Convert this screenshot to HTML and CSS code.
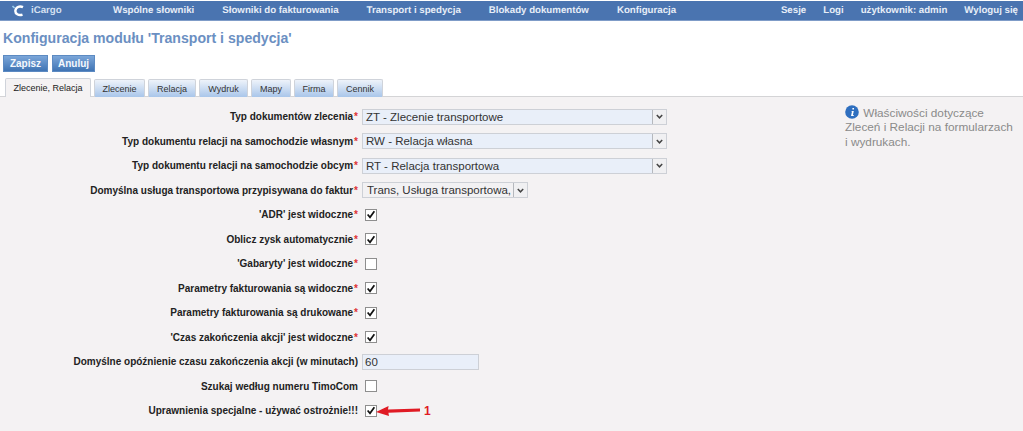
FILE: index.html
```html
<!DOCTYPE html>
<html lang="pl">
<head>
<meta charset="utf-8">
<title>iCargo</title>
<link rel="stylesheet" href="styles.css">
</head>
<body>
<nav class="nav">
  <div class="brand">
    <svg class="logo" width="12" height="12" viewBox="0 0 12 12"><path d="M11 2.2 C8 0.8 4 1.4 3.4 5.5 C3 8.8 6.5 11 10.5 9.6" fill="none" stroke="#fff" stroke-width="2.4"/><path d="M0.5 1 L2.6 3" stroke="#9fd0ee" stroke-width="1.6"/></svg>
    <span class="brand-name">iCargo</span>
  </div>
  <div class="menu">
    <a>Wspólne słowniki</a><a>Słowniki do fakturowania</a><a>Transport i spedycja</a><a>Blokady dokumentów</a><a>Konfiguracja</a>
  </div>
  <div class="menu-right">
    <a>Sesje</a><a>Logi</a><a>użytkownik: admin</a><a>Wyloguj się</a>
  </div>
</nav>
<h1 class="title">Konfiguracja modułu 'Transport i spedycja'</h1>
<div class="actions">
  <button class="btn btn-save">Zapisz</button>
  <button class="btn btn-cancel">Anuluj</button>
</div>
<div class="tabs">
  <div class="tab active t1">Zlecenie, Relacja</div>
  <div class="tab t2">Zlecenie</div>
  <div class="tab t3">Relacja</div>
  <div class="tab t4">Wydruk</div>
  <div class="tab t5">Mapy</div>
  <div class="tab t6">Firma</div>
  <div class="tab t7">Cennik</div>
</div>
<main class="panel">
  <div class="form">
    <div class="lbl">Typ dokumentów zlecenia<i>*</i></div>
    <div class="sel wide"><span>ZT - Zlecenie transportowe</span><b class="arrow"><svg width="7" height="5" viewBox="0 0 7 5"><path d="M0.8 1 L3.5 3.8 L6.2 1" fill="none" stroke="#444" stroke-width="1.5"/></svg></b></div>
    <div class="lbl">Typ dokumentu relacji na samochodzie własnym<i>*</i></div>
    <div class="sel wide"><span>RW - Relacja własna</span><b class="arrow"><svg width="7" height="5" viewBox="0 0 7 5"><path d="M0.8 1 L3.5 3.8 L6.2 1" fill="none" stroke="#444" stroke-width="1.5"/></svg></b></div>
    <div class="lbl">Typ dokumentu relacji na samochodzie obcym<i>*</i></div>
    <div class="sel wide"><span>RT - Relacja transportowa</span><b class="arrow"><svg width="7" height="5" viewBox="0 0 7 5"><path d="M0.8 1 L3.5 3.8 L6.2 1" fill="none" stroke="#444" stroke-width="1.5"/></svg></b></div>
    <div class="lbl">Domyślna usługa transportowa przypisywana do faktur<i>*</i></div>
    <div class="sel narrow"><span>Trans, Usługa transportowa,</span><b class="arrow"><svg width="7" height="5" viewBox="0 0 7 5"><path d="M0.8 1 L3.5 3.8 L6.2 1" fill="none" stroke="#444" stroke-width="1.5"/></svg></b></div>
    <div class="lbl">'ADR' jest widoczne<i>*</i></div>
    <div class="chk"><svg width="11" height="11" viewBox="0 0 11 11"><path d="M1.8 5.5 L4.4 8.6 L9.2 1.8" fill="none" stroke="#111" stroke-width="1.9"/></svg></div>
    <div class="lbl">Oblicz zysk automatycznie<i>*</i></div>
    <div class="chk"><svg width="11" height="11" viewBox="0 0 11 11"><path d="M1.8 5.5 L4.4 8.6 L9.2 1.8" fill="none" stroke="#111" stroke-width="1.9"/></svg></div>
    <div class="lbl">'Gabaryty' jest widoczne<i>*</i></div>
    <div class="chk"></div>
    <div class="lbl">Parametry fakturowania są widoczne<i>*</i></div>
    <div class="chk"><svg width="11" height="11" viewBox="0 0 11 11"><path d="M1.8 5.5 L4.4 8.6 L9.2 1.8" fill="none" stroke="#111" stroke-width="1.9"/></svg></div>
    <div class="lbl">Parametry fakturowania są drukowane<i>*</i></div>
    <div class="chk"><svg width="11" height="11" viewBox="0 0 11 11"><path d="M1.8 5.5 L4.4 8.6 L9.2 1.8" fill="none" stroke="#111" stroke-width="1.9"/></svg></div>
    <div class="lbl">'Czas zakończenia akcji' jest widoczne<i>*</i></div>
    <div class="chk"><svg width="11" height="11" viewBox="0 0 11 11"><path d="M1.8 5.5 L4.4 8.6 L9.2 1.8" fill="none" stroke="#111" stroke-width="1.9"/></svg></div>
    <div class="lbl">Domyślne opóźnienie czasu zakończenia akcji (w minutach)</div>
    <div class="inp">60</div>
    <div class="lbl">Szukaj według numeru TimoCom</div>
    <div class="chk"></div>
    <div class="lbl">Uprawnienia specjalne - używać ostrożnie!!!</div>
    <div class="chk marked"><svg width="11" height="11" viewBox="0 0 11 11"><path d="M1.8 5.5 L4.4 8.6 L9.2 1.8" fill="none" stroke="#111" stroke-width="1.9"/></svg>
      <div class="callout">
        <svg width="44" height="12" viewBox="0 0 44 12"><path d="M44 3.4 L12 4.6 L12.6 1 L0 7 L13 11 L12.4 7.8 L44 6.4 Z" fill="#e01b24"/></svg>
        <span>1</span>
      </div>
    </div>
  </div>
  <aside class="info">
    <svg class="info-icon" width="14" height="14" viewBox="0 0 14 14"><circle cx="7" cy="7" r="6.8" fill="#2f6fbf"/><path d="M7.4 3 h1.6 v1.6 h-1.6 Z M6.8 6 h2 L7.9 10 h1 l-.3 1 H6 L6.9 7 h-.4 Z" fill="#fff"/></svg>
    Właściwości dotyczące Zleceń i Relacji na formularzach i wydrukach.
  </aside>
</main>
</body>
</html>
```
FILE: styles.css
```css
* { box-sizing: border-box; }
html, body { height: 100%; }
body {
  margin: 0;
  background: #fff;
  font-family: "Liberation Sans", Arial, sans-serif;
  overflow: hidden;
  display: flex;
  flex-direction: column;
}
.nav {
  height: 20px;
  margin-top: 1px;
  flex: none;
  display: flex;
  align-items: center;
  background: #4a74b0;
  border-bottom: 1px solid #7f9cc8;
  color: #e6edf7;
  font-size: 9.7px;
  font-weight: bold;
  padding-right: 5px;
  text-rendering: geometricPrecision;
}
.brand { width: 113px; display: flex; align-items: center; padding-left: 12px; flex: none; }
.logo { flex: none; }
.brand-name { margin-left: 7px; color: #d5e0f0; }
.menu { display: flex; gap: 28px; white-space: nowrap; }
.menu-right { margin-left: auto; display: flex; gap: 17px; white-space: nowrap; }
.title {
  margin: 8px 0 0 3px;
  height: 18px;
  font-size: 14.1px;
  line-height: 18px;
  font-weight: bold;
  color: #6b8fc2;
  flex: none;
}
.actions { display: flex; gap: 4px; margin: 8px 0 0 3px; flex: none; }
.btn {
  height: 17px;
  border: 1px solid #5c8ac2;
  padding: 0;
  background: linear-gradient(#7ba6d9, #3f74b4);
  color: #f4f8fd;
  font: bold 10px "Liberation Sans", Arial, sans-serif;
}
.btn-save { width: 45px; }
.btn-cancel { width: 43px; }
.tabs { display: flex; gap: 3px; margin: 6px 0 0 5px; height: 19px; flex: none; align-items: flex-end; position: relative; z-index: 1; }
.tab {
  height: 18px;
  border: 1px solid #cfd3da;
  border-bottom: 0;
  border-radius: 2px 2px 0 0;
  background: linear-gradient(#eef3fa, #a9c6ea);
  font-size: 9px;
  line-height: 18px;
  text-align: center;
  color: #333;
  white-space: nowrap;
}
.tab.active { height: 19px; background: #f4f2f3; color: #222; }
.t1 { width: 86px; }
.t2 { width: 51px; }
.t3 { width: 48px; }
.t4 { width: 49px; }
.t5 { width: 40px; }
.t6 { width: 40px; }
.t7 { width: 46px; }
.panel {
  flex: 1;
  background: #f4f2f3;
  border-top: 1px solid #d4d4d6;
  margin-top: -1px;
  display: flex;
  padding-top: 7.5px;
  min-height: 0;
}
.form {
  width: 845px;
  flex: none;
  display: grid;
  grid-template-columns: 367px 1fr;
  grid-auto-rows: 24.5px;
  align-items: center;
}
.lbl {
  font-size: 10px;
  font-weight: bold;
  color: #222;
  text-align: right;
  padding-right: 9px;
  white-space: nowrap;
}
.lbl i { color: #d33; font-style: normal; margin-left: 1px; }
.sel {
  height: 16px;
  display: flex;
  align-items: center;
  justify-content: space-between;
  margin-left: -5px;
  background: #e9eff9;
  border: 1px solid #cdd0d6;
  font-size: 11.5px;
  color: #333;
  padding-left: 3px;
  white-space: nowrap;
}
.sel.wide { width: 305px; }
.sel.narrow { width: 166px; background: #f2f1f3; padding-left: 4px; }
.arrow {
  width: 14px;
  height: 14px;
  flex: none;
  display: flex;
  align-items: center;
  justify-content: center;
  background: #f0f0f2;
  border-left: 1px solid #b5b8bd;
}
.chk {
  width: 12px;
  height: 12px;
  margin-left: -2px;
  border: 1px solid #8e8e8e;
  background: #fff;
  display: flex;
  align-items: center;
  justify-content: center;
  position: relative;
}
.inp {
  height: 16px;
  margin-left: -5px;
  width: 117px;
  background: #e9eff9;
  border: 1px solid #cdd0d6;
  font-size: 11.5px;
  line-height: 14px;
  color: #333;
  padding-left: 2px;
}
.callout {
  position: absolute;
  left: 10px;
  top: -1px;
  display: flex;
  align-items: center;
  gap: 4px;
  color: #e01b24;
  font-size: 12px;
  font-weight: bold;
  line-height: 12px;
}
.info {
  width: 172px;
  font-size: 11.8px;
  line-height: 14.5px;
  color: #8a8a8a;
}
.info-icon { vertical-align: -2px; margin-right: 1px; }
```
